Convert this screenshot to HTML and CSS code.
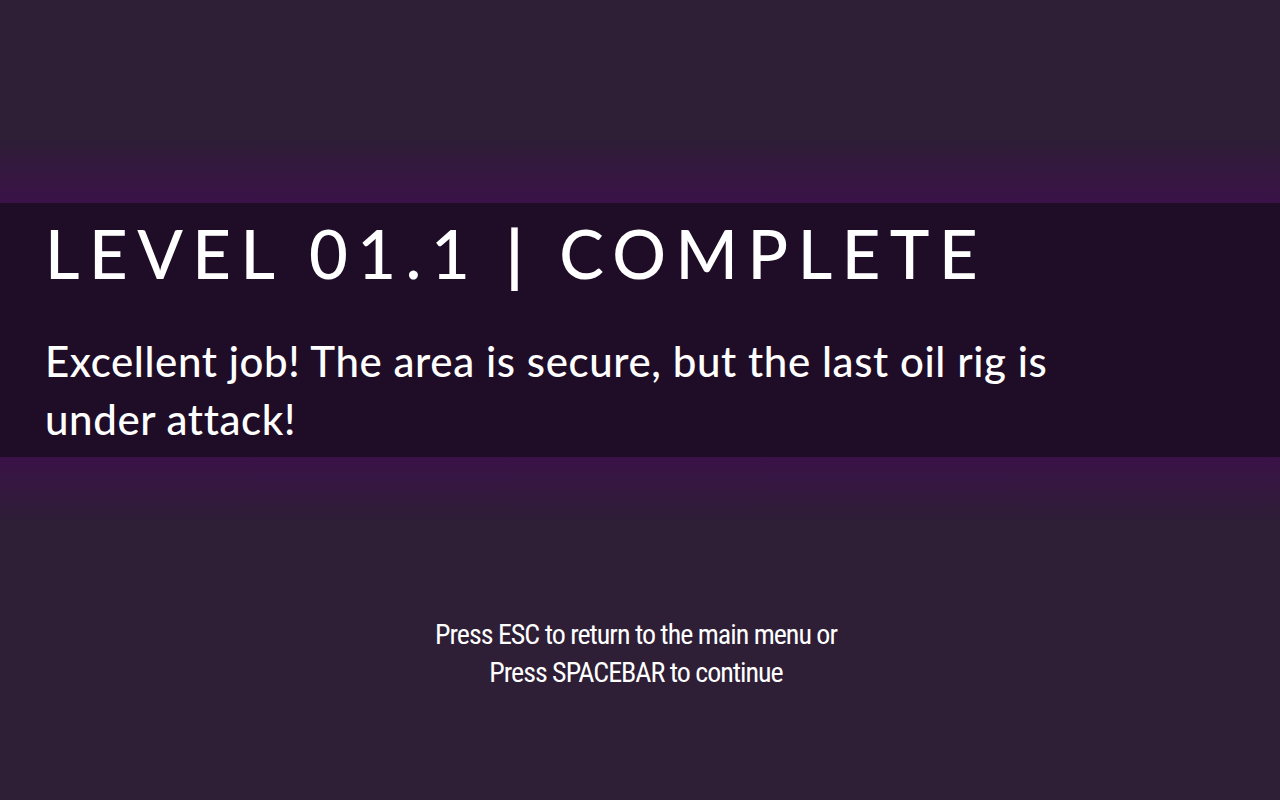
FILE: index.html
```
<!DOCTYPE html>
<html>
<head>
<meta charset="utf-8">
<link rel="stylesheet" href="styles.css">
</head>
<body>
<div class="screen">
  <div class="glow glow-top"></div>
  <section class="band">
    <h1 class="title">LEVEL 01.1 <span class="sep">|</span> COMPLETE</h1>
    <p class="message">Excellent job! The area is secure, but the last oil rig is under attack!</p>
  </section>
  <div class="glow glow-bottom"></div>
  <div class="prompt">
    <p>Press ESC to return to the main menu or</p>
    <p>Press SPACEBAR to continue</p>
  </div>
</div>
</body>
</html>
```
FILE: styles.css
```
html, body {
  margin: 0;
  padding: 0;
  background: #2e1e36;
}
.screen {
  width: 1280px;
  height: 800px;
  display: flex;
  flex-direction: column;
  background: #2e1e36;
  color: #ffffff;
  overflow: hidden;
}
.glow {
  height: 65px;
}
.glow-top {
  margin-top: 138px;
  background: linear-gradient(to bottom, rgba(59, 18, 73, 0), #3a1248);
}
.glow-bottom {
  background: linear-gradient(to top, rgba(59, 18, 73, 0), #3a1248);
}
.band {
  height: 254px;
  box-sizing: border-box;
  background: #1f0d28;
  padding: 10px 45px 0 45px;
}
.title {
  margin: 0;
  font-family: Lato, "Open Sans", sans-serif;
  font-weight: 500;
  font-size: 67px;
  line-height: 80px;
  letter-spacing: 9.5px;
}
.sep {
  font-weight: 700;
}
.message {
  margin: 39px 0 0 0;
  width: 1040px;
  font-family: Lato, "Open Sans", sans-serif;
  font-weight: 500;
  font-size: 42px;
  line-height: 58px;
  letter-spacing: 0.6px;
}
.prompt {
  margin-top: 94px;
  padding-right: 8px;
  text-align: center;
  font-family: "Liberation Sans Narrow", "Roboto Condensed", "Liberation Sans", sans-serif;
  font-size: 28px;
  line-height: 38px;
  letter-spacing: -1px;
}
.prompt p {
  margin: 0;
}
```
